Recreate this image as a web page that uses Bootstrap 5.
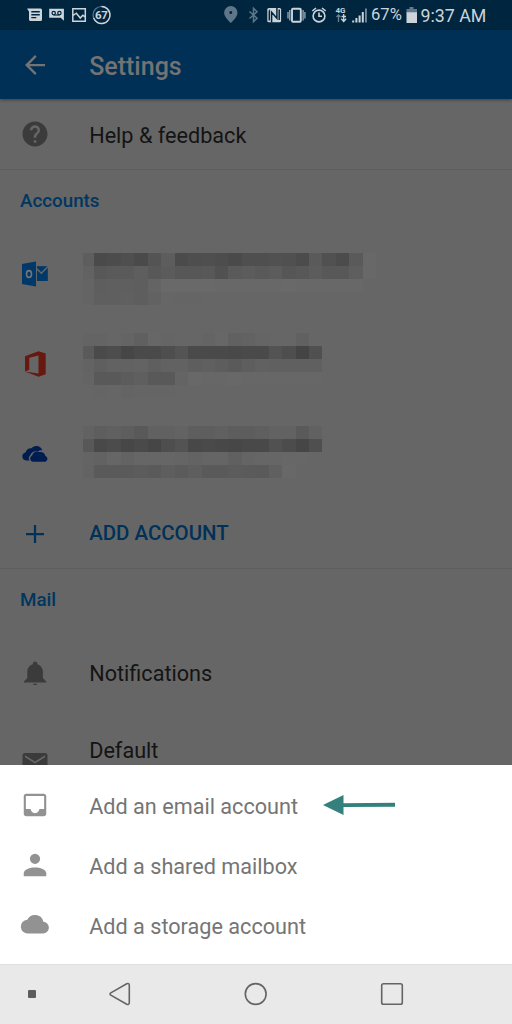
<!DOCTYPE html>
<html lang="en">
<head>
<meta charset="utf-8">
<meta name="viewport" content="width=device-width, initial-scale=1">
<title>Settings</title>
<link href="https://cdn.jsdelivr.net/npm/bootstrap@5.3.0/dist/css/bootstrap.min.css" rel="stylesheet">
<style>
  body { font-family: Roboto, "Liberation Sans", sans-serif; background: #666; color: #141414; line-height: 1; }
  .phone { width: 512px; height: 1024px; overflow: hidden; background: #666; }
  svg { display: block; flex: none; }
  .status { height: 30px; background: #00263f; color: #ccd4da; }
  .status-pct { font-size: 16.6px; width: 30px; margin-left: 3px; padding-top: 1px; }
  .status-time { font-size: 17.8px; padding-top: 1px; }
  .appbar { height: 69px; background: #003056; color: #737373; padding-left: 20px; box-shadow: 0 1px 3px rgba(0,0,0,.4); z-index: 1; }
  .appbar h1 { font-size: 25px; font-weight: 500; line-height: 1; padding-top: 3px; }
  .item { padding-left: 19.600px; gap: 39.600px; font-size: 21.65px; white-space: nowrap; }
  .item svg.mi { width: 30px; height: 30px; fill: currentColor; color: #3b3b3b; }
  .h-help { height: 71px; border-bottom: 1px solid #5e5e5e; }
  .h-help span, .sheet span { padding-top: 3px; }
  .h-acct { height: 90px; }
  .h-add { height: 70px; border-bottom: 1px solid #5e5e5e; font-size: 20.450px; }
  .heading { height: 59px; padding: 3px 0 0 20px; font-size: 18.8px; font-weight: 500; color: #003760; }
  .heading-mail { height: 60px; padding-top: 2px; }
  .blue { color: #003158; font-weight: 500; }
  .list-clip { height: 666px; overflow: hidden; }
  .default-label { padding-top: 21px; }
  .mosaic { margin-left: -6.200px; }
  .mosaic i { display: block; width: 13.45px; height: 13.2px; }
  .mosaic i:first-child { width: 11px; }
  .m-outlook { padding-top: 23.500px; }
  .m-office { padding-top: 13.500px; }
  .m-onedrive { padding-top: 16.500px; }
  .arrow { margin-left: -15px; }
  .sheet { height: 199px; background: #fff; color: #757575; padding-top: 10px; }
  .sheet .item { height: 60px; }
  .sheet .item svg.mi { color: #929292; }
  .navkeys { height: 60px; background: #e9e9e9; border-top: 1px solid #dfdfdf; padding-bottom: 1px; }
  .k1 { width: 63px; } .k2 { width: 114px; } .k3 { width: 158px; }
</style>
</head>
<body>
<div class="phone d-flex flex-column">

  <div class="status d-flex align-items-center flex-shrink-0">
    <svg width="368" height="30" viewBox="0 0 368 30" fill="#ccd4da">
      <!-- messages -->
      <path fill-rule="evenodd" d="M27 8.500h13.500q1.500 0 1.500 1.500v9.500q0 1.500-1.500 1.500h-10q-1.500 0-1.500-1.500v-8zM31.300 11.100v1.400h8.500v-1.400zM31.300 14v1.400h8.500V14zM31.300 16.900v1.400h5v-1.400z"/>
      <!-- voicemail -->
      <path d="M49.200 8.800h14.700v11.900l-3.200-2.900h-11.500z"/>
      <g fill="none" stroke="#00263f" stroke-width="1.200"><circle cx="53.700" cy="13.100" r="1.700"/><circle cx="59.400" cy="13.100" r="1.700"/><path d="M53.700 15h5.700"/></g>
      <!-- picture -->
      <path fill="none" stroke="#ccd4da" stroke-width="1.500" d="M72.800 8.800h12.500v12.500H72.800zM73 15.500l3.300-2.300 4 4.800 2.500-2.800 2.500 2"/>
      <!-- percentage ring -->
      <circle cx="101.500" cy="15" r="8.500" fill="none" stroke="#60788a" stroke-width="1.200"/>
      <path fill="none" stroke="#ccd4da" stroke-width="1.400" d="M101.500 6.500a8.500 8.500 0 1 1-7.900 11.600"/>
      <text x="101.300" y="19" text-anchor="middle" font-size="11.500" font-weight="700" letter-spacing="-.3">67</text>
      <!-- location -->
      <path fill="#5e7688" fill-rule="evenodd" d="M230.800 6a6.700 6.700 0 0 0-6.700 6.700c0 4.300 6.700 10.300 6.700 10.300s6.700-6 6.700-10.300a6.700 6.700 0 0 0-6.700-6.700zm0 5.100a1.500 1.500 0 1 1 0 3 1.500 1.500 0 0 1 0-3z"/>
      <!-- bluetooth -->
      <path fill="none" stroke="#5e7688" stroke-width="1.500" d="M249.500 11.500l7.500 6.700-3.500 3.500V8.300l3.500 3.500-7.500 6.700"/>
      <!-- nfc -->
      <rect x="267.300" y="8" width="13.800" height="14.200" rx="1.500"/>
      <path fill="none" stroke="#00263f" stroke-width="1.500" d="M271.600 22.500V12.200l5.300 6V8M269.800 10q-.5 0-.5 2v8.500M279.200 20q0 0 0-2V9.500"/>
      <!-- vibrate -->
      <rect x="292" y="8.700" width="8.800" height="13" rx="1" fill="none" stroke="#ccd4da" stroke-width="1.900"/>
      <path fill="none" stroke="#9aaab5" stroke-width="1.300" d="M289.800 10v10.500M288 12v6.500M303.100 10v10.500M304.900 12v6.500"/>
      <!-- alarm -->
      <g fill="none" stroke="#ccd4da" stroke-width="1.600"><circle cx="319" cy="16" r="5.900"/><path d="M319 12.500v3.800h3M312.300 11l3.700-3M325.700 11l-3.700-3"/></g>
      <!-- 4g data -->
      <text x="335.500" y="13" font-size="8" font-weight="700" textLength="10">4G</text>
      <g fill="none" stroke-width="1.300"><path stroke="#6c8292" d="M338.500 22v-7M336.500 17l2-2 2 2"/><path stroke="#ccd4da" d="M343.700 14v7.500M341.300 18.800l2.400 2.700 2.400-2.700M341.500 16.500h4.500"/></g>
      <!-- signal -->
      <path d="M352.200 20.500h2v2h-2zM355.400 18h2v4.500h-2zM358.600 15.500h2v7h-2zM361.800 12h2v10.500h-2z"/><path fill="#71879a" d="M365 8.500h1.900v14H365z"/>
    </svg>
    <span class="status-pct text-nowrap">67%</span>
    <svg width="19.500" height="30" viewBox="0 0 19.500 30"><path fill="#60788a" d="M8.500 7h4v2h3.500v4H5.500V9h3z"/><path fill="#ccd4da" d="M5.500 12.300H16V23H5.500z"/></svg>
    <span class="status-time text-nowrap">9:37 AM</span>
  </div>

  <header class="appbar item d-flex align-items-center flex-shrink-0 position-relative">
    <svg width="30" height="30" viewBox="0 0 24 24" fill="currentColor"><path d="M20 11.100H7.700l5.600-5.700L12 4l-8 8 8 8 1.300-1.400-5.600-5.700H20z"/></svg>
    <h1 class="m-0">Settings</h1>
  </header>

  <main class="list-clip flex-shrink-0">
    <div class="item h-help d-flex align-items-center">
      <svg class="mi" viewBox="0 0 24 24"><path d="M12 2C6.480 2 2 6.480 2 12s4.480 10 10 10 10-4.480 10-10S17.520 2 12 2zm1 17h-2v-2h2v2zm2.070-7.750l-.9.920C13.450 12.900 13 13.500 13 15h-2v-.5c0-1.100.45-2.100 1.170-2.830l1.240-1.260c.37-.36.59-.86.59-1.410 0-1.100-.9-2-2-2s-2 .9-2 2H8c0-2.210 1.790-4 4-4s4 1.790 4 4c0 .88-.36 1.680-.93 2.250z"/></svg>
      <span>Help &amp; feedback</span>
    </div>

    <div class="heading d-flex align-items-center">Accounts</div>
    <div class="item h-acct d-flex align-items-start">
      <svg class="align-self-center" width="30" height="30" viewBox="0 0 30 30"><path fill="#00386a" d="M2 5l14-2.500v25L2 25z"/><path fill="#00386a" d="M17 7.200h10.800V22H17z"/><path d="M17 10l4.300 4.200L28 7.500" fill="none" stroke="#666" stroke-width="1.500"/><ellipse cx="9" cy="15" rx="2.500" ry="3.400" fill="none" stroke="#757575" stroke-width="1.600"/></svg>
      <div class="mosaic m-outlook"></div>
    </div>
    <div class="item h-acct d-flex align-items-start">
      <svg class="align-self-center" width="30" height="30" viewBox="0 0 30 30"><path fill="#67190f" fill-rule="evenodd" d="M5 7.200l13.500-5L25.700 4.400v20.800l-7.200 2.500L5 22.600l13.500 1.800V6.500L9.300 8.700v12L5 22.600z"/></svg>
      <div class="mosaic m-office"></div>
    </div>
    <div class="item h-acct d-flex align-items-start">
      <svg class="align-self-center" width="30" height="30" viewBox="0 0 30 30"><path fill="#001d50" d="M9.500 21.500H6.200a4 4 0 0 1-.7-7.900A5 5 0 0 1 11 9.400a6.500 6.500 0 0 1 11.300 2 6 6 0 0 0-4.500 1 6.300 6.300 0 0 0-7.600 3.800 4.300 4.300 0 0 0-.7 5.300z"/><path fill="#001d50" d="M13 22.700a3.300 3.300 0 0 1-.9-6.300 5.400 5.400 0 0 1 7.500-3.300 4.800 4.800 0 0 1 5.800 3.900 3 3 0 0 1 0 5.700z"/></svg>
      <div class="mosaic m-onedrive"></div>
    </div>
    <div class="item h-add d-flex align-items-center blue">
      <svg width="30" height="30" viewBox="0 0 24 24" fill="currentColor"><path d="M19.200 12.900h-6.300v6.300h-1.800v-6.300H4.800v-1.800h6.300V4.800h1.800v6.300h6.300z"/></svg>
      <span>ADD ACCOUNT</span>
    </div>

    <div class="heading heading-mail d-flex align-items-center">Mail</div>
    <div class="item h-acct d-flex align-items-center">
      <svg class="mi" viewBox="0 0 24 24"><path d="M12 22c1.100 0 2-.5 2-1.200h-4c0 .7.900 1.200 2 1.200zm7-6v-5.500c0-3.070-2.140-5.640-5-6.320V3.500C14 2.670 12.830 2 12 2s-2 .67-2 1.500v.68C7.130 4.860 5 7.420 5 10.500V16L2 19v.8h20V19z" transform="translate(1.400 .2) scale(.89 .94)"/></svg>
      <span>Notifications</span>
    </div>
    <div class="item h-acct d-flex align-items-start">
      <svg class="mi align-self-center" viewBox="0 0 24 24"><path d="M20 4H4c-1.100 0-1.990.9-1.990 2L2 18c0 1.100.9 2 2 2h16c1.100 0 2-.9 2-2V6c0-1.100-.9-2-2-2zm0 3.300l-8 5-8-5V5.800l8 5 8-5z" transform="translate(0 -.8)"/></svg>
      <span class="default-label">Default</span>
    </div>
  </main>

  <section class="sheet flex-shrink-0">
    <div class="item d-flex align-items-center">
      <svg class="mi" viewBox="0 0 24 24"><path d="M19 3H5c-1.100 0-2 .9-2 2v14c0 1.100.9 2 2 2h14c1.100 0 2-.9 2-2V5c0-1.100-.9-2-2-2zm.3 12.200h-3.800c0 1.700-1.800 3.300-3.500 3.300s-3.500-1.600-3.500-3.300H4.700V4.700h14.600z"/></svg>
      <span>Add an email account</span>
      <svg class="arrow" width="72" height="22" viewBox="0 0 72 22" fill="#33807d"><path d="M0 11L20.500 1v8.200L72 8.700v4.100L20.500 13v8z"/></svg>
    </div>
    <div class="item d-flex align-items-center">
      <svg class="mi" viewBox="0 0 24 24"><circle cx="12" cy="7" r="4.100"/><path d="M3 18.600c0-3.100 5-4.600 9-4.600s9 1.500 9 4.600V21H3z"/></svg>
      <span>Add a shared mailbox</span>
    </div>
    <div class="item d-flex align-items-center">
      <svg class="mi" viewBox="0 0 24 24"><path d="M18.600 9.700A6.900 6.900 0 0 0 5.700 8 5.500 5.500 0 0 0 6.400 19h11.700a4.600 4.600 0 0 0 .5-9.300z" transform="translate(.1 -.3)"/></svg>
      <span>Add a storage account</span>
    </div>
  </section>

  <nav class="navkeys d-flex align-items-center flex-shrink-0">
    <div class="k1 d-flex justify-content-center"><svg width="8" height="8"><rect width="8" height="8" rx="1" fill="#5c5c5c"/></svg></div>
    <div class="k2 d-flex justify-content-center"><svg width="22" height="24" viewBox="0 0 22 24" fill="none" stroke="#646464" stroke-width="1.600"><path d="M1.800 10.900L17.700 1.700q2.400-.8 2.600 1.500v17.600q-.2 2.300-2.600 1.500L1.800 13.100q-1.400-1.100 0-2.200z"/></svg></div>
    <div class="k3 d-flex justify-content-center"><svg width="24" height="24" fill="none" stroke="#646464" stroke-width="1.600"><circle cx="11.700" cy="12" r="10.400"/></svg></div>
    <div class="k2 d-flex justify-content-center"><svg width="24" height="24" fill="none" stroke="#646464" stroke-width="1.600"><rect x="1.700" y="1.700" width="20.600" height="20.600" rx="1.800"/></svg></div>
  </nav>
</div>

<script src="https://cdn.jsdelivr.net/npm/bootstrap@5.3.0/dist/js/bootstrap.bundle.min.js"></script>
<script>
  // Grey levels (hex) of the pixelated account names, one string per row of blocks
  const names = [
    ["5e 4a 4c 4f 4a 54 5d 4b 4e 4f 4d 4a 4f 4f 51 50 4c 5a 51 4c 5a 68",
     "62 58 5a 5a 5e 58 5b 57 57 58 51 5a 5c 59 5c 56 58 5c 58 58 5e 68",
     "64 5e 5f 5f 5e 64 69 69 69 69 68 68 68 68 68 69 68 68 68 68 68",
     "64 5f 5f 60 5e 62 66 65 65"],
    ["64 64 66 64 60 67 65 66 66 64 67 61 62 65 66 66 61",
     "5a 4a 4d 46 4a 4a 4e 54 4a 4a 4a 49 4a 4a 53 4e 44 50",
     "63 5f 62 62 63 5f 62 62 5e 60 5d 5a 5e 61 60 60 60 60",
     "64 59 59 5c 5f 59 59 64 68 67 67 68 67 67 67 67 67 67",
     "66 65 66 64 65 65 65"],
    ["62 5e 60 5e 59 61 61 63 5e 5e 60 5d 5d 5f 62 62 5a 61",
     "58 49 4c 47 4a 46 4e 53 48 4a 48 47 49 49 51 4c 46 4f",
     "64 62 66 63 66 66 66 65 63 65 65 60 64 66 66 67 67 66",
     "63 5a 5a 5a 5c 5a 5e 5b 5e 5a 5a 5c 5b 5a 60 68"]
  ];
  document.querySelectorAll(".mosaic").forEach((box, n) => {
    box.innerHTML = names[n].map(row => '<div class="d-flex">' +
      row.split(" ").map(g => `<i style="background:#${g}${g}${g}"></i>`).join("") + "</div>").join("");
  });
</script>
</body>
</html>
